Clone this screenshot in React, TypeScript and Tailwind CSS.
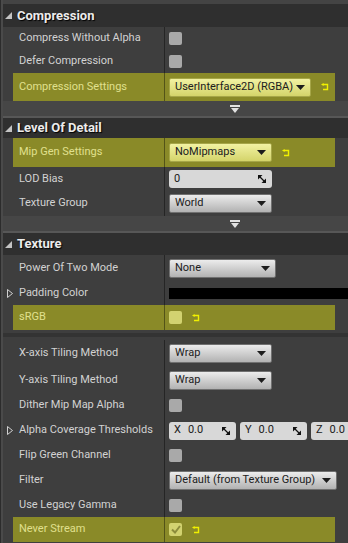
import type { ReactNode } from 'react';

const HL = 'bg-[#8a8a28]';

function HeaderTri() {
  return (
    <svg width="7" height="7" viewBox="0 0 7 7" className="shrink-0">
      <polygon points="7,0 7,7 0,7" fill="#c4c4c4" />
    </svg>
  );
}

function Header({ title, h }: { title: string; h: string }) {
  return (
    <div className={`flex items-center gap-[5px] bg-[#2f2f2f] pl-[2px] ${h}`}>
      <HeaderTri />
      <span className="text-[13px] font-bold text-[#ececec] [text-shadow:1px_1px_1px_#000]">{title}</span>
    </div>
  );
}

function Expander({ h }: { h: string }) {
  return (
    <div className="flex flex-col">
      <div className={`flex items-center justify-center bg-[#464646] pl-[119px] ${h}`}>
        <svg width="10" height="8" viewBox="0 0 10 8">
          <rect x="0" y="0" width="10" height="2" fill="#e2e2e2" />
          <polygon points="1,3 9,3 5,8" fill="#e2e2e2" />
        </svg>
      </div>
      <div className="h-[2px] bg-[#575757]" />
    </div>
  );
}

function ResetIcon() {
  return (
    <svg width="8" height="8" viewBox="0 0 8 8" className="shrink-0">
      <path d="M2 1.5 H6.5 V6.5 H2" fill="none" stroke="#f0f000" strokeWidth="1.4" />
      <polygon points="0,1.5 2.6,0 2.6,3" fill="#f0f000" />
    </svg>
  );
}

function ExpandTri() {
  return (
    <svg width="6" height="9" viewBox="0 0 6 9" className="shrink-0">
      <polygon points="0.5,0.5 5.5,4.5 0.5,8.5" fill="none" stroke="#d0d0d0" strokeWidth="1" />
    </svg>
  );
}

function Checkbox({ hl, checked }: { hl?: boolean; checked?: boolean }) {
  return (
    <div
      className={`flex h-[13px] w-[13px] shrink-0 items-center justify-center rounded-[2px] ${hl ? 'bg-[#d2d270]' : 'bg-[#a9a9a9]'}`}
    >
      {checked && (
        <svg width="10" height="9" viewBox="0 0 10 9">
          <path d="M1 4.5 L4 7.5 L9 1" fill="none" stroke="#8c8c3c" strokeWidth="2" />
        </svg>
      )}
    </div>
  );
}

function Combo({ text, w, hl }: { text: string; w: string; hl?: boolean }) {
  return (
    <div
      className={`flex h-[19px] shrink-0 items-center justify-between rounded-[2px] border pl-[5px] pr-[5px] text-[11px] text-[#202020] ${w} ${
        hl
          ? 'border-[#a6a648] bg-gradient-to-b from-[#f2f2a2] to-[#d4d46a]'
          : 'border-[#707070] bg-gradient-to-b from-[#ececec] to-[#b2b2b2]'
      }`}
    >
      <span className="whitespace-nowrap">{text}</span>
      <svg width="9" height="5" viewBox="0 0 9 5" className="shrink-0">
        <polygon points="0,0 9,0 4.5,5" fill="#1c1c1c" />
      </svg>
    </div>
  );
}

function SpinIcon() {
  return (
    <svg width="8" height="8" viewBox="0 0 8 8" className="shrink-0">
      <polygon points="0,0 4.5,0 0,4.5" fill="#111" />
      <polygon points="8,8 3.5,8 8,3.5" fill="#111" />
      <line x1="1" y1="1" x2="7" y2="7" stroke="#111" strokeWidth="1.3" />
    </svg>
  );
}

function Spin({ value, w, prefix }: { value: string; w: string; prefix?: string }) {
  return (
    <div
      className={`flex h-[18px] shrink-0 items-center justify-between rounded-[3px] bg-[#d8d8d8] pl-[5px] pr-[6px] text-[11px] text-[#202020] ${w}`}
    >
      <span className="flex gap-[7px] whitespace-nowrap">
        {prefix && <span>{prefix}</span>}
        <span>{value}</span>
      </span>
      <SpinIcon />
    </div>
  );
}

function Row({
  label,
  h,
  hl,
  expandable,
  children,
}: {
  label: string;
  h: string;
  hl?: boolean;
  expandable?: boolean;
  children?: ReactNode;
}) {
  if (hl) {
    return (
      <div className={`ml-[10px] flex w-[322px] ${HL} ${h}`}>
        <div className="flex w-[152px] shrink-0 items-center border-r border-black/40 pl-[6px] text-[11px] text-[#e0e08e]">
          {label}
        </div>
        <div className="flex items-center gap-[10px] pl-[4px]">{children}</div>
      </div>
    );
  }
  return (
    <div className={`flex ${h}`}>
      <div className="flex w-[162px] shrink-0 items-center border-r border-black/40 pl-[4px] text-[11px] text-[#d2d2d2]">
        <div className="flex w-[12px] shrink-0">{expandable && <ExpandTri />}</div>
        <span className="whitespace-nowrap">{label}</span>
      </div>
      <div className="flex min-w-0 flex-1 items-center gap-[4px] pl-[4px]">{children}</div>
    </div>
  );
}

export default function App() {
  return (
    <div className="flex h-[543px] w-[348px] overflow-hidden bg-[#3e3e3e] font-['Roboto',sans-serif]">
      <div className="w-[3px] shrink-0 border-l border-[#2c2c2c] bg-[#4a4a4a]" />
      <div className="flex min-w-0 flex-1 flex-col">
        <div className="h-[4px] bg-[#444444]" />
        <Header title="Compression" h="h-[23px]" />
        <Row label="Compress Without Alpha" h="h-[23px]">
          <Checkbox />
        </Row>
        <Row label="Defer Compression" h="h-[23px]">
          <Checkbox />
        </Row>
        <Row label="Compression Settings" h="h-[28px]" hl>
          <Combo text="UserInterface2D (RGBA)" w="w-[142px]" hl />
          <ResetIcon />
        </Row>
        <Expander h="h-[15px]" />

        <Header title="Level Of Detail" h="h-[20px]" />
        <Row label="Mip Gen Settings" h="h-[29px]" hl>
          <Combo text="NoMipmaps" w="w-[103px]" hl />
          <ResetIcon />
        </Row>
        <Row label="LOD Bias" h="h-[24px]">
          <Spin value="0" w="w-[103px]" />
        </Row>
        <Row label="Texture Group" h="h-[25px]">
          <Combo text="World" w="w-[103px]" />
        </Row>
        <Expander h="h-[15px]" />

        <Header title="Texture" h="h-[22px]" />
        <Row label="Power Of Two Mode" h="h-[27px]">
          <Combo text="None" w="w-[107px]" />
        </Row>
        <Row label="Padding Color" h="h-[23px]" expandable>
          <div className="h-[11px] flex-1 bg-black" />
        </Row>
        <Row label="sRGB" h="h-[25px]" hl>
          <Checkbox hl />
          <ResetIcon />
        </Row>
        <div className="flex h-[10px] flex-col pt-[3px]">
          <div className="h-[4px] bg-[#333333]" />
        </div>
        <Row label="X-axis Tiling Method" h="h-[27px]">
          <Combo text="Wrap" w="w-[103px]" />
        </Row>
        <Row label="Y-axis Tiling Method" h="h-[26px]">
          <Combo text="Wrap" w="w-[103px]" />
        </Row>
        <Row label="Dither Mip Map Alpha" h="h-[25px]">
          <Checkbox />
        </Row>
        <Row label="Alpha Coverage Thresholds" h="h-[25px]" expandable>
          <Spin prefix="X" value="0.0" w="w-[67px]" />
          <Spin prefix="Y" value="0.0" w="w-[67px]" />
          <Spin prefix="Z" value="0.0" w="w-[67px]" />
        </Row>
        <Row label="Flip Green Channel" h="h-[24px]">
          <Checkbox />
        </Row>
        <Row label="Filter" h="h-[27px]">
          <Combo text="Default (from Texture Group)" w="w-[168px]" />
        </Row>
        <Row label="Use Legacy Gamma" h="h-[23px]">
          <Checkbox />
        </Row>
        <Row label="Never Stream" h="h-[25px]" hl>
          <Checkbox hl checked />
          <ResetIcon />
        </Row>
      </div>
    </div>
  );
}
